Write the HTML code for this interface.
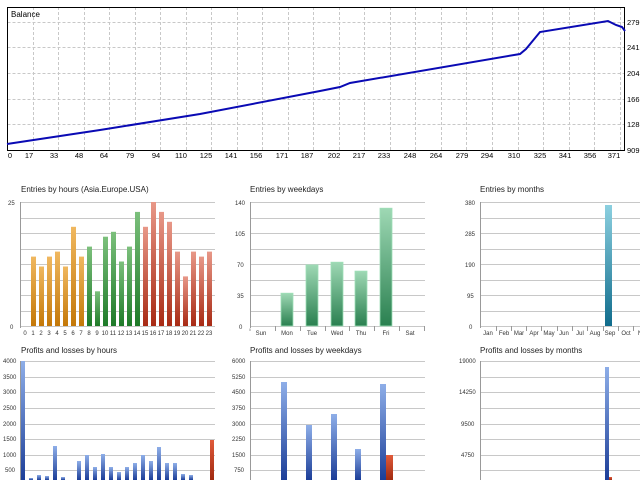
<!DOCTYPE html>
<html><head><meta charset="utf-8"><style>
html,body{margin:0;padding:0;background:#fff;}
svg{display:block;font-family:"Liberation Sans",sans-serif;}
</style></head><body>
<svg width="640" height="480" viewBox="0 0 640 480" xmlns="http://www.w3.org/2000/svg">
<defs>
<linearGradient id="og" x1="0" y1="0" x2="0" y2="1"><stop offset="0" stop-color="#f0b860"/><stop offset="1" stop-color="#c47808"/></linearGradient>
<linearGradient id="gg" x1="0" y1="0" x2="0" y2="1"><stop offset="0" stop-color="#7cc07c"/><stop offset="1" stop-color="#1e7a28"/></linearGradient>
<linearGradient id="rg" x1="0" y1="0" x2="0" y2="1"><stop offset="0" stop-color="#e89888"/><stop offset="1" stop-color="#a82a14"/></linearGradient>
<linearGradient id="wg" x1="0" y1="0" x2="0" y2="1"><stop offset="0" stop-color="#9ed8b4"/><stop offset="1" stop-color="#2a8050"/></linearGradient>
<linearGradient id="mg" x1="0" y1="0" x2="0" y2="1"><stop offset="0" stop-color="#8cd0e0"/><stop offset="1" stop-color="#106c8c"/></linearGradient>
<linearGradient id="bg" x1="0" y1="0" x2="0" y2="1"><stop offset="0" stop-color="#8eaee8"/><stop offset="1" stop-color="#1c3e98"/></linearGradient>
<linearGradient id="lg" x1="0" y1="0" x2="0" y2="1"><stop offset="0" stop-color="#e05a3a"/><stop offset="1" stop-color="#a02a10"/></linearGradient>
</defs>

<g stroke="#c8c8c8" stroke-width="1" stroke-dasharray="3,2" fill="none">
<path d="M7.5 22.5H624M7.5 47.5H624M7.5 73.5H624M7.5 99.5H624M7.5 124.5H624"/>
<path d="M33.5 7V150M58.5 7V150M84.5 7V150M109.5 7V150M135.5 7V150M160.5 7V150M186.5 7V150M211.5 7V150M237.5 7V150M262.5 7V150M288.5 7V150M313.5 7V150M339.5 7V150M364.5 7V150M390.5 7V150M415.5 7V150M441.5 7V150M466.5 7V150M492.5 7V150M518.5 7V150M543.5 7V150M569.5 7V150M594.5 7V150M620.5 7V150"/>
</g>
<rect x="7.5" y="7.5" width="617" height="143" fill="none" stroke="#000"/>
<text x="11" y="17" font-size="8">Balance</text>
<polyline fill="none" stroke="#0a0ab4" stroke-width="2" points="7,144 100,130 200,114 320,91 340,87 350,83 520,54 526,49 540,32 608,21 616,25 622,27 625,31"/>
<g font-size="7.5" fill="#000" text-anchor="middle">
<text x="10" y="158">0</text><text x="29" y="158">17</text><text x="54" y="158">33</text><text x="79" y="158">48</text><text x="104" y="158">64</text><text x="130" y="158">79</text><text x="156" y="158">94</text><text x="181" y="158">110</text><text x="206" y="158">125</text><text x="231" y="158">141</text><text x="256" y="158">156</text><text x="282" y="158">171</text><text x="307" y="158">187</text><text x="334" y="158">202</text><text x="359" y="158">217</text><text x="384" y="158">233</text><text x="410" y="158">248</text><text x="436" y="158">264</text><text x="462" y="158">279</text><text x="487" y="158">294</text><text x="514" y="158">310</text><text x="540" y="158">325</text><text x="565" y="158">341</text><text x="590" y="158">356</text><text x="614" y="158">371</text>
</g>
<g font-size="7.5" fill="#000">
<text x="627" y="25">279</text><text x="627" y="50">241</text><text x="627" y="76">204</text><text x="627" y="102">166</text><text x="627" y="127">128</text><text x="627" y="153">909</text>
</g>

<g stroke="#c8c8c8" stroke-width="1">
<path d="M20 202.5H215M20 218.5H215M20 233.5H215M20 249.5H215M20 264.5H215M20 280.5H215M20 295.5H215M20 311.5H215M20 326.5H215"/>
<path d="M250 202.5H425M250 218.5H425M250 233.5H425M250 249.5H425M250 264.5H425M250 280.5H425M250 295.5H425M250 311.5H425M250 326.5H425"/>
<path d="M480 202.5H640M480 218.5H640M480 233.5H640M480 249.5H640M480 264.5H640M480 280.5H640M480 295.5H640M480 311.5H640M480 326.5H640"/>
<path d="M20 361.5H215M20 377.5H215M20 392.5H215M20 408.5H215M20 424.5H215M20 439.5H215M20 455.5H215M20 470.5H215"/>
<path d="M250 361.5H425M250 377.5H425M250 392.5H425M250 408.5H425M250 424.5H425M250 439.5H425M250 455.5H425M250 470.5H425"/>
<path d="M480 361.5H640M480 377.5H640M480 392.5H640M480 408.5H640M480 424.5H640M480 439.5H640M480 455.5H640M480 470.5H640"/>
</g>
<g stroke="#999" stroke-width="1">
<path d="M20.5 202V328M250.5 202V328M480.5 202V328M20.5 361V480M250.5 361V480M480.5 361V480"/>
<path d="M250 328.5V331M275.5 326V331M300.5 326V331M325.5 326V331M349.5 326V331M374.5 326V331M399.5 326V331M424.5 326V331"/>
<path d="M496.5 326V331M511.5 326V331M526.5 326V331M541.5 326V331M557.5 326V331M572.5 326V331M587.5 326V331M603.5 326V331M618.5 326V331M633.5 326V331"/>
</g>

<g font-size="8" fill="#222">
<text x="21" y="192">Entries by hours (Asia.Europe.USA)</text>
<text x="250" y="192">Entries by weekdays</text>
<text x="480" y="192">Entries by months</text>
<text x="21" y="353">Profits and losses by hours</text>
<text x="250" y="353">Profits and losses by weekdays</text>
<text x="480" y="353">Profits and losses by months</text>
</g>

<g>
<rect x="31" y="256.6" width="5" height="69.4" fill="url(#og)"/>
<rect x="39" y="266.5" width="5" height="59.5" fill="url(#og)"/>
<rect x="47" y="256.6" width="5" height="69.4" fill="url(#og)"/>
<rect x="55" y="251.6" width="5" height="74.4" fill="url(#og)"/>
<rect x="63" y="266.5" width="5" height="59.5" fill="url(#og)"/>
<rect x="71" y="226.8" width="5" height="99.2" fill="url(#og)"/>
<rect x="79" y="256.6" width="5" height="69.4" fill="url(#og)"/>
<rect x="87" y="246.6" width="5" height="79.4" fill="url(#gg)"/>
<rect x="95" y="291.3" width="5" height="34.7" fill="url(#gg)"/>
<rect x="103" y="236.7" width="5" height="89.3" fill="url(#gg)"/>
<rect x="111" y="231.8" width="5" height="94.2" fill="url(#gg)"/>
<rect x="119" y="261.5" width="5" height="64.5" fill="url(#gg)"/>
<rect x="127" y="246.6" width="5" height="79.4" fill="url(#gg)"/>
<rect x="135" y="211.9" width="5" height="114.1" fill="url(#gg)"/>
<rect x="143" y="226.8" width="5" height="99.2" fill="url(#rg)"/>
<rect x="151" y="202" width="5" height="124" fill="url(#rg)"/>
<rect x="159" y="211.9" width="5" height="114.1" fill="url(#rg)"/>
<rect x="167" y="221.8" width="5" height="104.2" fill="url(#rg)"/>
<rect x="175" y="251.6" width="5" height="74.4" fill="url(#rg)"/>
<rect x="183" y="276.4" width="5" height="49.6" fill="url(#rg)"/>
<rect x="191" y="251.6" width="5" height="74.4" fill="url(#rg)"/>
<rect x="199" y="256.6" width="5" height="69.4" fill="url(#rg)"/>
<rect x="207" y="251.6" width="5" height="74.4" fill="url(#rg)"/>
</g>
<g font-size="6" fill="#333" text-anchor="middle">
<text x="25" y="335">0</text><text x="33" y="335">1</text><text x="41" y="335">2</text><text x="49" y="335">3</text><text x="57" y="335">4</text><text x="65" y="335">5</text><text x="73" y="335">6</text><text x="81" y="335">7</text><text x="89" y="335">8</text><text x="97" y="335">9</text><text x="105" y="335">10</text><text x="113" y="335">11</text><text x="121" y="335">12</text><text x="129" y="335">13</text><text x="137" y="335">14</text><text x="145" y="335">15</text><text x="153" y="335">16</text><text x="161" y="335">17</text><text x="169" y="335">18</text><text x="177" y="335">19</text><text x="185" y="335">20</text><text x="193" y="335">21</text><text x="201" y="335">22</text><text x="209" y="335">23</text>
<text x="261" y="335">Sun</text><text x="287" y="335">Mon</text><text x="312" y="335">Tue</text><text x="337" y="335">Wed</text><text x="361" y="335">Thu</text><text x="386" y="335">Fri</text><text x="410" y="335">Sat</text>
<text x="488" y="335">Jan</text><text x="504" y="335">Feb</text><text x="519" y="335">Mar</text><text x="534" y="335">Apr</text><text x="549" y="335">May</text><text x="564" y="335">Jun</text><text x="580" y="335">Jul</text><text x="595" y="335">Aug</text><text x="610" y="335">Sep</text><text x="626" y="335">Oct</text><text x="640" y="335">N</text>
</g>
<g font-size="6" fill="#333">
<text x="8" y="205">25</text><text x="10" y="329">0</text>
<text x="235" y="205">140</text><text x="235" y="236">105</text><text x="237" y="267">70</text><text x="237" y="298">35</text><text x="239" y="329">0</text>
<text x="465" y="205">380</text><text x="465" y="236">285</text><text x="465" y="267">190</text><text x="467" y="298">95</text><text x="469" y="329">0</text>
<text x="3" y="363">4000</text><text x="3" y="379">3500</text><text x="3" y="394">3000</text><text x="3" y="410">2500</text><text x="3" y="426">2000</text><text x="3" y="441">1500</text><text x="3" y="457">1000</text><text x="5" y="472">500</text>
<text x="232" y="363">6000</text><text x="232" y="379">5250</text><text x="232" y="394">4500</text><text x="232" y="410">3750</text><text x="232" y="426">3000</text><text x="232" y="441">2250</text><text x="232" y="457">1500</text><text x="234" y="472">750</text>
<text x="459" y="363">19000</text><text x="459" y="394">14250</text><text x="461" y="426">9500</text><text x="461" y="457">4750</text>
</g>

<rect x="281" y="293.2" width="12" height="32.8" fill="url(#wg)" stroke="#9ee0b8" stroke-width="0.8"/>
<rect x="306" y="264.9" width="12" height="61.1" fill="url(#wg)" stroke="#9ee0b8" stroke-width="0.8"/>
<rect x="331" y="262.2" width="12" height="63.8" fill="url(#wg)" stroke="#9ee0b8" stroke-width="0.8"/>
<rect x="355" y="271.1" width="12" height="54.9" fill="url(#wg)" stroke="#9ee0b8" stroke-width="0.8"/>
<rect x="380" y="208.2" width="12" height="117.8" fill="url(#wg)" stroke="#9ee0b8" stroke-width="0.8"/>
<rect x="605" y="205" width="7" height="121" fill="url(#mg)"/>

<g fill="url(#bg)">
<rect x="21" y="361" width="4" height="119"/>
<rect x="29" y="478" width="4" height="2"/>
<rect x="37" y="475" width="4" height="5"/>
<rect x="45" y="476" width="4" height="4"/>
<rect x="53" y="446" width="4" height="34"/>
<rect x="61" y="477" width="4" height="3"/>
<rect x="77" y="461" width="4" height="19"/>
<rect x="85" y="455" width="4" height="25"/>
<rect x="93" y="467" width="4" height="13"/>
<rect x="101" y="454" width="4" height="26"/>
<rect x="109" y="467" width="4" height="13"/>
<rect x="117" y="472" width="4" height="8"/>
<rect x="125" y="467" width="4" height="13"/>
<rect x="133" y="463" width="4" height="17"/>
<rect x="141" y="455" width="4" height="25"/>
<rect x="149" y="461" width="4" height="19"/>
<rect x="157" y="447" width="4" height="33"/>
<rect x="165" y="463" width="4" height="17"/>
<rect x="173" y="463" width="4" height="17"/>
<rect x="181" y="474" width="4" height="6"/>
<rect x="189" y="475" width="4" height="5"/>
</g>
<rect x="210" y="440" width="4" height="40" fill="url(#lg)"/>
<g fill="url(#bg)">
<rect x="281" y="382" width="6" height="98"/>
<rect x="306" y="425" width="6" height="55"/>
<rect x="331" y="414" width="6" height="66"/>
<rect x="355" y="449" width="6" height="31"/>
<rect x="380" y="384" width="6" height="96"/>
</g>
<rect x="386" y="455" width="7" height="25" fill="url(#lg)"/>
<rect x="605" y="367" width="4" height="113" fill="url(#bg)"/>
<rect x="609" y="477" width="3" height="3" fill="url(#lg)"/>
</svg>
</body></html>
